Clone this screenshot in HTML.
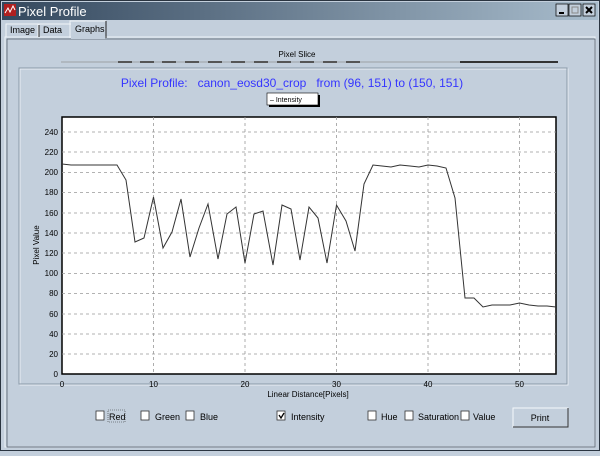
<!DOCTYPE html>
<html><head><style>
body{margin:0;width:600px;height:451px;overflow:hidden;background:#c3cfdc;font-family:"Liberation Sans",sans-serif}
text{white-space:pre}
</style></head><body>
<svg width="600" height="451" viewBox="0 0 600 451" xmlns="http://www.w3.org/2000/svg" font-family="Liberation Sans, sans-serif" xml:space="preserve">
<defs><linearGradient id="tb" x1="0" x2="1"><stop offset="0" stop-color="#34485e"/><stop offset="1" stop-color="#a8bccc"/></linearGradient></defs>
<rect width="600" height="451" fill="#c3cfdc"/>
<rect x="0" y="0" width="600" height="451" fill="none" stroke="#2a3440" stroke-width="2"/>
<rect x="2" y="2" width="596" height="18" fill="url(#tb)"/>
<rect x="4" y="4" width="12" height="12" fill="#b02020"/><path d="M5 13 L8 8 L10 12 L13 6 L15 10" stroke="#fff" fill="none" stroke-width="1"/>
<text x="18" y="16" font-size="13" fill="#fff">Pixel Profile</text>
<g fill="#c3cfdc" stroke="#000" stroke-width="0.7"><rect x="556" y="4" width="12" height="12"/><rect x="569" y="4" width="12" height="12"/><rect x="583" y="4" width="12" height="12"/></g>
<path d="M559 13h5" stroke="#000" stroke-width="2"/><rect x="572" y="7" width="6" height="6" fill="none" stroke="#888"/><path d="M586 7l6 6M592 7l-6 6" stroke="#000" stroke-width="2"/>
<rect x="5" y="37" width="590" height="410" fill="none" stroke="#eef3f8"/>
<rect x="6" y="38" width="588" height="408" fill="none" stroke="#55606c" stroke-width="0.8" transform="translate(1,1)"/>
<path d="M6 37V24h32v13" fill="none" stroke="#f0f4f8"/><text x="10" y="33" font-size="9">Image</text>
<path d="M39 37V24h32" fill="none" stroke="#f0f4f8"/><path d="M39 25v12" stroke="#222"/><text x="43" y="33" font-size="9">Data</text>
<path d="M70 38V21h36" fill="none" stroke="#f0f4f8"/><path d="M106 21v17" stroke="#222"/><rect x="71" y="22" width="34" height="17" fill="#c3cfdc"/><text x="75" y="32" font-size="9">Graphs</text>
<text x="297" y="57" font-size="8" text-anchor="middle">Pixel Slice</text>
<rect x="61" y="61" width="497" height="2" fill="#b0b8c0"/>
<g fill="#555"><rect x="118" y="61" width="14" height="2"/><rect x="140" y="61" width="14" height="2"/><rect x="162" y="61" width="14" height="2"/><rect x="185" y="61" width="14" height="2"/><rect x="208" y="61" width="14" height="2"/><rect x="231" y="61" width="14" height="2"/><rect x="254" y="61" width="14" height="2"/><rect x="277" y="61" width="14" height="2"/><rect x="300" y="61" width="14" height="2"/><rect x="323" y="61" width="14" height="2"/><rect x="346" y="61" width="14" height="2"/><rect x="460" y="61" width="98" height="2" fill="#333"/></g>
<rect x="20" y="69" width="548" height="316" fill="none" stroke="#e8eef4"/>
<rect x="19" y="68" width="548" height="316" fill="none" stroke="#8898a8"/>
<text x="292" y="87" font-size="12" fill="#3535ff" text-anchor="middle">Pixel Profile:   canon_eosd30_crop   from (96, 151) to (150, 151)</text>
<rect x="269" y="95" width="51" height="12" fill="#000"/><rect x="267" y="93" width="51" height="12" fill="#fff" stroke="#000" stroke-width=".6"/>
<text x="270" y="102" font-size="7">– Intensity</text>
<rect x="62" y="117" width="494" height="257" fill="#fff" stroke="#000" stroke-width="1.5"/>
<g stroke="#999" stroke-dasharray="3,3" stroke-width=".8">
<path d="M62 132H556M62 152H556M62 172.5H556M62 192.5H556M62 213H556M62 233H556M62 253H556M62 273.5H556M62 293.5H556M62 314H556M62 334H556M62 354H556"/>
<path d="M153.5 117V374M245 117V374M336.5 117V374M428 117V374M519.5 117V374"/>
</g>
<g font-size="8" text-anchor="end">
<text x="58" y="135">240</text><text x="58" y="155">220</text><text x="58" y="175">200</text><text x="58" y="195">180</text><text x="58" y="216">160</text><text x="58" y="236">140</text><text x="58" y="256">120</text><text x="58" y="276">100</text><text x="58" y="296">80</text><text x="58" y="317">60</text><text x="58" y="337">40</text><text x="58" y="357">20</text><text x="58" y="377">0</text></g>
<g font-size="8" text-anchor="middle"><text x="62" y="387">0</text><text x="153.5" y="387">10</text><text x="245" y="387">20</text><text x="336.5" y="387">30</text><text x="428" y="387">40</text><text x="519.5" y="387">50</text></g>
<text x="308" y="397" font-size="8" text-anchor="middle">Linear Distance[Pixels]</text>
<text x="39" y="245" font-size="8" text-anchor="middle" transform="rotate(-90 39 245)">Pixel Value</text>
<polyline fill="none" stroke="#333" stroke-width="1" points="62,164 71,165 80,165 90,165 99,165 108,165 117,165 126,180 135,242 144,238 153.5,197 163,248 172,232 181,199 190,257 199,228 208,204 218,259 227,214 236,207 245,263 254,214 263,211 273,265 282,205 291,209 300,260 309,207 318,218 327,263 336.5,205 346,221 355,251 364,184 373,165 382,166 391,167 400,165 410,166 419,167 428,165 437,166 446,168 455,198 465,298 474,298 483,307 492,305 501,305 510,305 519.5,303 529,305 538,306 547,306 556,307"/>
<g font-size="9"><g fill="#fff" stroke="#333" stroke-width=".8">
<rect x="96" y="411" width="8" height="9"/><rect x="141" y="411" width="8" height="9"/><rect x="186" y="411" width="8" height="9"/><rect x="277" y="411" width="8" height="9"/><rect x="368" y="411" width="8" height="9"/><rect x="405" y="411" width="8" height="9"/><rect x="461" y="411" width="8" height="9"/></g>
<path d="M279 415l2 3 3-5" stroke="#000" fill="none" stroke-width="1.3"/>
<text x="109" y="420">Red</text><text x="155" y="420">Green</text><text x="200" y="420">Blue</text><text x="291" y="420">Intensity</text><text x="381" y="420">Hue</text><text x="418" y="420">Saturation</text><text x="473" y="420">Value</text>
</g>
<rect x="108" y="410" width="17" height="12" fill="none" stroke="#333" stroke-dasharray="1,1" stroke-width=".6"/>
<rect x="513" y="408" width="55" height="19" fill="#c3cfdc" stroke="#f4f8fb"/><path d="M513 427h55v-19" stroke="#333" fill="none"/>
<text x="540" y="421" font-size="9" text-anchor="middle">Print</text>
</svg>
</body></html>
